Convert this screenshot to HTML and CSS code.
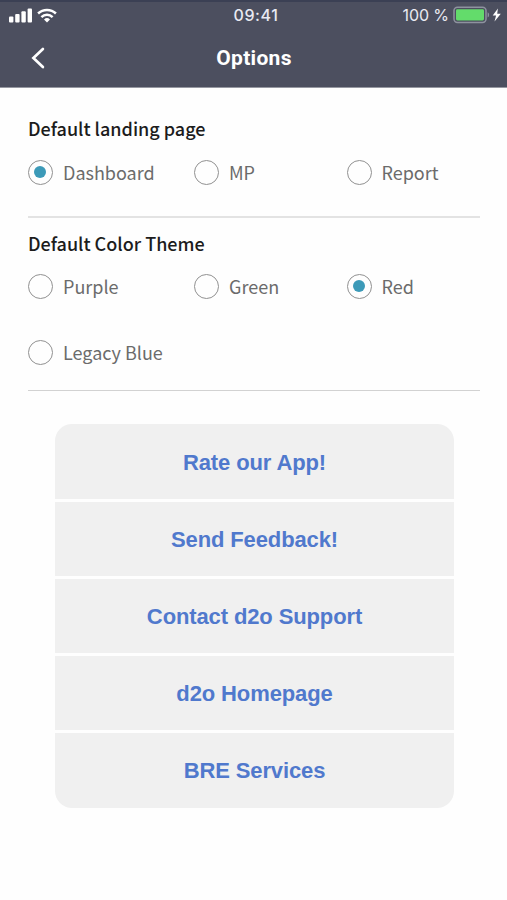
FILE: index.html
```html
<!DOCTYPE html>
<html lang="en">
<head>
<meta charset="utf-8">
<title>Options</title>
<link rel="stylesheet" href="styles.css">
</head>
<body>
<header class="header">
  <div class="status">
    <div class="status-left">
      <svg class="signal" width="24" height="15" viewBox="0 0 24 15" fill="#fff"><rect x="0" y="8.5" width="4.4" height="6" rx="1"/><rect x="6.2" y="6" width="4.4" height="8.5" rx="1"/><rect x="12.4" y="3.3" width="4.4" height="11.2" rx="1"/><rect x="18.6" y="0.5" width="4.4" height="14" rx="1"/></svg>
      <svg class="wifi" width="20" height="15" viewBox="0 0 20 15" fill="none" stroke="#fff" stroke-width="2.5"><path d="M1.1 5.5a12.8 12.8 0 0 1 17.8 0"/><path d="M4.4 9.1a8 8 0 0 1 11.2 0"/><path d="M10 14.4l-3-3a4.4 4.4 0 0 1 6 0z" fill="#fff" stroke="none"/></svg>
    </div>
    <div class="time">09:41</div>
    <div class="status-right">
      <span class="percent">100 %</span>
      <svg width="50" height="18" viewBox="0 0 50 18"><rect x="1" y="1.2" width="32" height="15.2" rx="3.4" fill="none" stroke="#8e929f" stroke-width="1.5"/><rect x="3" y="3.2" width="28" height="11.2" rx="1.4" fill="#63dc6b"/><path d="M34.6 6.2c2 .8 2 4.4 0 5.2z" fill="#8e929f"/><path d="M44.9 2.4l-5.2 7.2h3.4l-1.6 5.8 6.3-7.7h-3.6z" fill="#fff"/></svg>
    </div>
  </div>
  <div class="nav">
    <svg class="back" width="14" height="22" viewBox="0 0 14 22" fill="none" stroke="#fff" stroke-width="2.7" stroke-linecap="round"><path d="M11.9 2L2.4 11l9.5 9"/></svg>
    <h1 class="title">Options</h1>
  </div>
</header>
<main class="content">
  <section class="group landing">
    <h2 class="heading">Default landing page</h2>
    <div class="options">
      <div class="option"><span class="radio on"></span><span>Dashboard</span></div>
      <div class="option"><span class="radio"></span><span>MP</span></div>
      <div class="option"><span class="radio"></span><span>Report</span></div>
    </div>
  </section>
  <section class="group theme">
    <h2 class="heading">Default Color Theme</h2>
    <div class="options">
      <div class="option"><span class="radio"></span><span>Purple</span></div>
      <div class="option"><span class="radio"></span><span>Green</span></div>
      <div class="option"><span class="radio on"></span><span>Red</span></div>
      <div class="option"><span class="radio"></span><span>Legacy Blue</span></div>
    </div>
  </section>
  <nav class="links">
    <a class="link">Rate our App!</a>
    <a class="link">Send Feedback!</a>
    <a class="link">Contact d2o Support</a>
    <a class="link">d2o Homepage</a>
    <a class="link">BRE Services</a>
  </nav>
</main>
</body>
</html>
```

FILE: styles.css
```css
* { box-sizing: border-box; }
body { margin: 0; background: #fefefe; font-family: "Noto Sans CJK SC", sans-serif; }
.header {
  height: 88px;
  background: #4c4f5f;
  border-top: 2px solid #3b4054;
  border-bottom: 1px solid #9698a1;
  color: #fff;
  font-family: Inter, sans-serif;
}
.status {
  display: grid;
  grid-template-columns: 1fr auto 1fr;
  align-items: center;
  height: 26px;
  padding: 0 4px 0 9px;
  color: #e9eaf2;
}
.status-left { display: flex; gap: 4px; }
.time { font-size: 16px; font-weight: 500; letter-spacing: 0.6px; }
.status-right { display: flex; align-items: center; justify-content: flex-end; }
.percent { font-size: 16px; letter-spacing: -0.1px; margin-right: 4px; }
.nav {
  display: grid;
  grid-template-columns: 1fr auto 1fr;
  align-items: center;
  height: 60px;
}
.back { margin: 0 0 0 31px; }
.title { margin: 0 0 0 1px; font-size: 21px; line-height: 26px; font-weight: 700; letter-spacing: 0.3px; font-family: Roboto, sans-serif; }
.content { padding: 0 27px 0 28px; }
.group { border-bottom: 2px solid #e3e3e3; }
.landing { height: 130px; padding-top: 28px; }
.landing .options { padding-top: 20px; }
.theme { height: 173px; padding-top: 13px; border-bottom: 1px solid #d2d2d2; }
.heading {
  margin: 0;
  font-size: 18px;
  font-weight: 500;
  line-height: 24px;
  color: #1c1c1c;
}
.options {
  display: grid;
  grid-template-columns: 166px 152.5px 1fr;
  row-gap: 42px;
  padding-top: 19px;
}
.option {
  display: flex;
  align-items: center;
  gap: 10px;
  height: 24px;
  font-size: 18px;
  line-height: 24px;
  color: #6b6b6b;
  white-space: nowrap;
}
.radio {
  flex: none;
  display: grid;
  place-items: center;
  width: 25px;
  height: 25px;
  border: 1px solid #919191;
  border-radius: 50%;
}
.on::after { content: ""; width: 12px; height: 12px; margin-right: 1px; border-radius: 50%; background: #3c9ab8; }
.links {
  display: grid;
  grid-template-rows: 75px repeat(3, 74px) 75px;
  gap: 3px;
  margin: 33px 26px 0 27px;
  border-radius: 17px;
  overflow: hidden;
}
.link {
  display: flex;
  align-items: center;
  justify-content: center;
  padding-top: 1px;
  background: #f0f0f0;
  color: #5079cd;
  font: 700 22px "Liberation Sans", sans-serif;
  letter-spacing: -0.12px;
}
.link:first-child { padding-top: 3px; }
```
